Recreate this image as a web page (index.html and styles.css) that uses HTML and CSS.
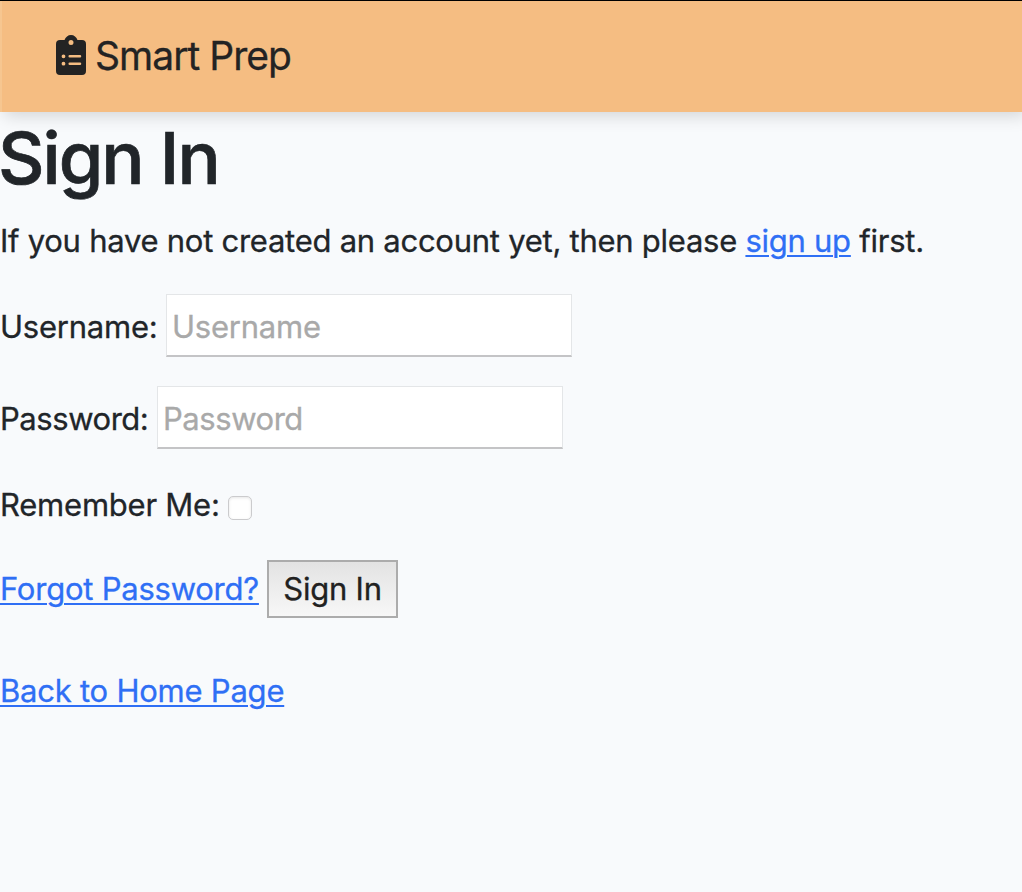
FILE: index.html
```html
<!DOCTYPE html>
<html lang="en">
<head>
<meta charset="utf-8">
<title>Smart Prep</title>
<link rel="stylesheet" href="styles.css">
</head>
<body>
<nav class="navbar">
  <a class="brand" href="#">
    <svg class="brand-icon" viewBox="0 0 30 40" aria-hidden="true">
      <path fill="#232323" fill-rule="evenodd" d="M4 5h4.500C9.500 2 12 0 15 0s5.500 2 6.500 5H26a4 4 0 0 1 4 4v27a4 4 0 0 1-4 4H4a4 4 0 0 1-4-4V9a4 4 0 0 1 4-4ZM15 5a2.500 2.500 0 1 0 0 5a2.500 2.500 0 0 0 0-5ZM7.500 19.400a1.900 1.900 0 1 0 0 3.800a1.900 1.900 0 0 0 0-3.800ZM7.500 26.800a1.900 1.900 0 1 0 0 3.800a1.900 1.900 0 0 0 0-3.800ZM13.700 20a1.200 1.200 0 0 0 0 2.500H24a1.200 1.200 0 0 0 0-2.500ZM13.700 27.500a1.200 1.200 0 0 0 0 2.500H24a1.200 1.200 0 0 0 0-2.500Z"/>
    </svg>
    <span class="brand-name">Smart Prep</span>
  </a>
</nav>
<main>
  <h1 class="title">Sign In</h1>
  <p class="intro">If you have not created an account yet, then please <a href="#">sign up</a> first.</p>
  <form class="form">
    <div class="field"><label class="label-user" for="user">Username:</label><input class="input" id="user" type="text" placeholder="Username"></div>
    <div class="field field-pass"><label class="label-pass" for="pass">Password:</label><input class="input" id="pass" type="password" placeholder="Password"></div>
    <div class="remember"><label class="label-remember" for="remember">Remember Me:</label><input class="check" id="remember" type="checkbox"></div>
    <div class="actions"><a class="forgot" href="#">Forgot Password?</a><button class="submit" type="button">Sign In</button></div>
  </form>
  <p class="back"><a href="#">Back to Home Page</a></p>
</main>
</body>
</html>
```

FILE: styles.css
```css
* { box-sizing: border-box; }
body {
  margin: 0;
  min-height: 892px;
  background: #f8fafc;
  color: #212529;
  font: 31px/48px Inter, "Liberation Sans", sans-serif;
  letter-spacing: -.23px;
  -webkit-text-stroke: .3px currentColor;
  white-space: nowrap;
  overflow: hidden;
}
a { color: #2f6ff5; text-decoration-thickness: 2px; text-underline-offset: 3px; }
h1, p { margin: 0; }
.navbar {
  height: 112px;
  padding-left: 56px;
  border-top: 1px solid #000;
  background: linear-gradient(90deg, #f6c690 2px, #f5bd82 2px);
  box-shadow: 4px 4px 16px rgba(0, 0, 0, .15);
}
.brand {
  display: flex;
  align-items: center;
  gap: 9px;
  height: 110px;
  color: #232323;
  text-decoration: none;
}
.brand-icon { width: 30px; height: 40px; margin-top: -2px; }
.brand-name { font-size: 39px; letter-spacing: -.98px; }
.title {
  padding-top: 3px;
  margin-left: -2px;
  font-size: 72px;
  line-height: 86px;
  font-weight: 500;
  letter-spacing: -2px;
  -webkit-text-stroke-width: .7px;
}
.intro { margin-top: 16px; letter-spacing: -.26px; }
.form { margin-top: 29px; }
.field { display: flex; align-items: center; height: 63px; margin-bottom: 29px; }
.field-pass { margin-bottom: 32px; letter-spacing: -.45px; }
.label-user { width: 166px; padding-top: 3px; }
.label-pass { width: 157px; padding-top: 3px; }
.input {
  width: 406px;
  height: 63px;
  padding: 5px 5px 2px;
  border: 1px solid #e4e6e8;
  border-bottom: 2px solid #c4c4c6;
  border-radius: 0;
  background: #fff;
  color: #212529;
  font: inherit;
  letter-spacing: inherit;
}
.input::placeholder { color: #a9a9a9; opacity: 1; }
.remember { display: flex; align-items: center; height: 48px; }
.label-remember { width: 228px; }
.check {
  appearance: none;
  width: 24px;
  height: 24px;
  margin: 5px 0 0;
  border: 1px solid #cbcbcd;
  border-radius: 5px;
  background: #fff;
  box-shadow: inset 0 1px 3px rgba(0, 0, 0, .1);
}
.actions { display: flex; align-items: center; height: 58px; margin-top: 31px; }
.forgot { width: 267px; }
.submit {
  width: 131px;
  height: 58px;
  padding: 0;
  border: 2px solid #acacac;
  background: linear-gradient(#e3e3e3, #f7f7f7);
  color: #212121;
  font: inherit;
  letter-spacing: -.23px;
}
.back { margin-top: 49px; }
```
